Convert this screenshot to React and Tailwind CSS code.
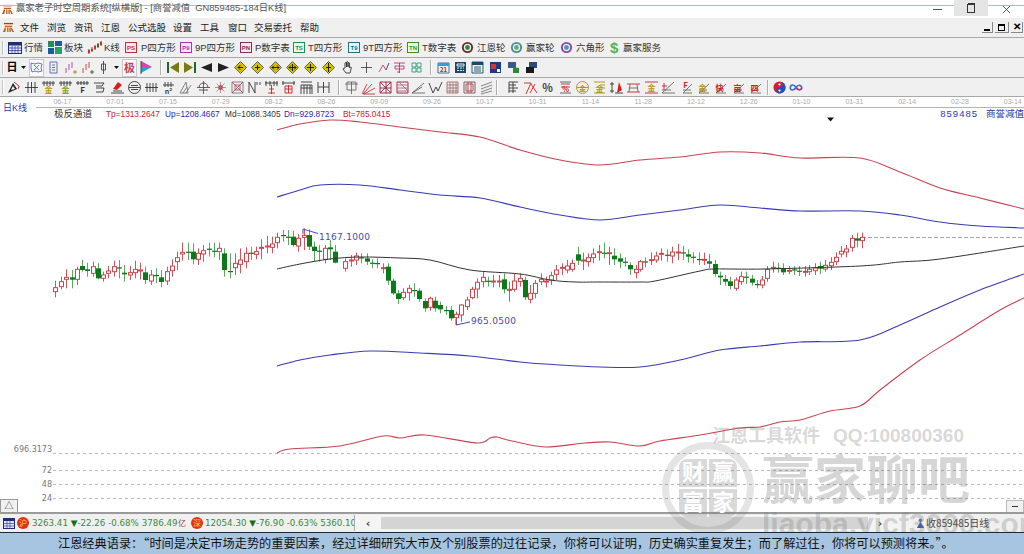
import React from "react";

const FONT = "font-['Liberation_Sans','Noto_Sans_CJK_SC',sans-serif]";

// candle data: [zoomX, bodyTop, bodyBottom, wickTop, wickBottom, colour]
const c6 = [[46,203,215,182,232,"r"],[63,185,200,170,208,"r"],[79,172,178,148,205,"r"],[95,172,179,150,205,"g"],[110,148,178,140,195,"r"],[126,138,150,120,155,"g"],[142,148,153,128,170,"g"],[158,140,160,125,170,"r"],[174,145,175,130,178,"g"],[189,165,175,155,185,"r"],[205,153,160,138,175,"r"],[221,140,155,122,170,"r"],[237,142,145,120,175,"g"],[253,158,163,135,185,"g"],[269,158,165,138,180,"r"],[285,148,158,122,175,"r"],[300,150,152,128,178,"r"],[316,157,180,140,192,"g"],[332,165,183,150,195,"r"],[348,165,168,145,190,"g"],[364,172,186,150,202,"g"],[380,155,183,140,195,"r"],[395,138,152,118,170,"r"],[410,113,125,95,150,"r"],[427,97,102,68,122,"r"],[443,95,98,68,120,"g"],[459,95,118,70,133,"g"],[474,100,118,85,135,"r"],[490,92,102,75,125,"r"],[506,86,88,68,110,"g"],[522,92,95,68,112,"g"],[538,85,95,68,120,"r"],[553,100,150,85,170,"g"],[569,153,156,100,175,"g"],[585,130,143,100,165,"r"],[601,120,133,85,160,"r"],[617,100,125,82,145,"r"],[633,98,100,80,120,"g"],[648,95,103,80,118,"r"],[664,82,84,58,118,"r"],[680,78,80,48,100,"r"],[695,72,82,50,100,"r"],[712,52,68,38,85,"r"],[728,45,47,30,65,"g"],[744,50,52,30,75,"g"],[759,50,75,32,80,"g"],[775,55,78,42,95,"r"],[791,46,52,25,90,"r"],[807,45,80,28,90,"g"],[822,80,93,65,125,"g"],[838,92,95,75,125,"g"],[854,85,118,75,130,"r"],[870,82,88,60,120,"g"],[885,95,128,75,130,"g"]];
const c7 = [[16,95,115,85,125,"r"],[32,90,93,75,110,"r"],[48,78,90,68,105,"r"],[64,82,85,70,100,"g"],[80,85,95,70,105,"g"],[96,98,100,88,115,"g"],[112,99,101,85,115,"g"],[128,113,116,100,130,"r"],[143,110,152,100,165,"g"],[159,152,190,145,195,"g"],[175,190,207,180,222,"g"],[190,187,203,175,210,"r"],[206,175,188,165,212,"r"],[222,180,182,160,200,"g"],[238,182,207,175,215,"g"],[254,213,235,205,245,"g"],[270,205,232,200,242,"r"],[286,212,235,200,245,"g"],[301,225,238,215,250,"g"],[317,240,242,228,255,"g"],[333,240,265,228,272,"g"],[349,253,263,245,285,"r"],[364,225,255,222,275,"r"],[380,210,230,200,240,"r"],[396,178,203,170,208,"r"],[412,157,177,145,205,"r"],[428,142,155,125,172,"r"],[444,152,155,140,170,"g"],[460,153,155,135,172,"r"],[476,153,155,135,172,"r"],[491,148,178,130,190,"g"],[507,178,181,155,215,"r"],[523,153,178,130,185,"r"],[539,145,155,130,170,"r"],[555,150,202,140,210,"g"],[570,190,208,165,220,"r"],[586,160,190,150,205,"r"],[602,148,155,130,165,"r"],[618,153,156,140,172,"r"],[634,137,150,125,165,"r"],[649,120,133,105,150,"r"],[665,112,114,100,135,"r"],[681,108,120,90,130,"r"],[697,100,118,88,125,"r"],[713,73,92,50,105,"g"],[729,90,93,68,120,"r"],[744,83,95,70,110,"r"],[760,72,83,55,100,"r"],[776,65,67,45,92,"r"],[792,68,70,38,85,"g"],[808,68,70,50,105,"r"],[823,77,88,55,105,"g"],[839,85,95,70,115,"g"],[855,95,98,82,110,"g"],[871,105,118,97,135,"g"],[887,118,128,105,145,"r"]];
const c8 = [[0,125,148,120,155,"r"],[16,124,127,112,142,"g"],[32,119,122,97,135,"r"],[48,108,120,95,128,"r"],[64,100,103,85,122,"r"],[80,104,107,88,125,"g"],[97,96,108,80,130,"r"],[113,96,99,72,120,"r"],[129,97,99,78,120,"g"],[145,103,110,88,128,"g"],[160,110,113,97,130,"g"],[176,117,120,97,135,"g"],[192,118,120,98,135,"r"],[208,124,131,102,145,"g"],[224,132,162,120,170,"g"],[240,167,172,155,195,"g"],[255,177,185,165,197,"g"],[271,184,198,170,208,"g"],[287,180,205,172,212,"r"],[303,170,185,155,195,"r"],[319,170,172,155,192,"g"],[335,176,188,165,197,"g"],[351,192,195,180,205,"g"],[366,180,195,168,205,"r"],[382,148,175,138,185,"r"],[398,142,145,125,158,"r"],[414,143,147,128,158,"g"],[430,147,157,130,165,"g"],[446,151,153,138,162,"r"],[462,148,151,138,165,"g"],[478,152,155,138,168,"g"],[494,154,157,138,170,"r"],[508,148,155,135,165,"r"],[524,144,152,130,165,"r"],[540,138,146,125,162,"g"],[556,136,147,120,155,"r"],[572,127,137,112,150,"r"],[587,112,125,97,135,"r"],[603,94,102,78,112,"r"],[619,87,96,75,112,"r"],[635,55,82,45,95,"r"],[651,55,62,38,82,"g"],[667,52,62,38,85,"r"]];

const conv = (list, ox, oy) => list.map(([x, t, b, wt, wb, c]) => ({ x: Math.round(ox + x / 3) + 0.5, t: oy + t / 3, b: oy + b / 3, wt: oy + wt / 3, wb: oy + wb / 3, c }));
const candles = [...conv(c6, 40, 220), ...conv(c7, 340, 230), ...conv(c8, 640, 220)];

// Catmull-Rom smoothing so the channel lines curve like the reference
const smooth = (a) => {
  let d = `M${a[0][0]} ${a[0][1]}`;
  for (let i = 0; i < a.length - 1; i++) {
    const p0 = a[i - 1] || a[i];
    const p1 = a[i];
    const p2 = a[i + 1];
    const p3 = a[i + 2] || p2;
    d += `C${p1[0] + (p2[0] - p0[0]) / 6} ${p1[1] + (p2[1] - p0[1]) / 6} ${p2[0] - (p3[0] - p1[0]) / 6} ${p2[1] - (p3[1] - p1[1]) / 6} ${p2[0]} ${p2[1]}`;
  }
  return d;
};
const redTop = [[277,130],[300,124],[330,120],[360,122],[400,127],[440,132],[480,137],[520,150],[560,160],[600,165],[640,160],[680,157],[720,152],[760,153],[800,158],[860,158],[900,172],[940,188],[980,198],[1024,209]];
const blueTop = [[277,197],[300,190],[320,185],[360,185],[400,190],[440,195],[480,198],[520,207],[560,215],[600,220],[640,215],[680,210],[720,205],[760,208],[800,211],[860,211],[900,215],[940,222],[980,226],[1024,228]];
const black = [[277,269],[300,264],[330,259],[360,257],[400,258],[430,260],[470,270],[520,274],[550,280],[575,282],[600,282],[640,282],[655,281],[700,271],[715,269],[765,269],[860,266],[900,262],[940,259],[1024,246]];
const blueBot = [[277,366],[300,360],[330,355],[370,351],[420,353],[470,356],[520,362],[560,365],[600,367],[640,367],[680,360],[720,350],[760,346],[800,342],[860,340],[900,325],[940,307],[980,290],[1024,274]];
const redBot = [[277,453],[290,449],[340,446],[383,436],[400,438],[425,435],[477,443],[490,438],[497,437],[512,441],[545,447],[585,443],[610,442],[640,446],[660,441],[700,435],[740,428],[760,427],[780,422],[800,420],[830,411],[860,406],[880,390],[920,360],[960,335],[1000,310],[1024,298]];

function Chart() {
  return (
    <svg viewBox="0 108 1024 405" className="absolute inset-0 w-[1024px] h-[405px]">
      {[453, 470, 484, 498].map((y) => (
        <line key={y} x1="53" x2="1024" y1={y + 0.5} y2={y + 0.5} stroke="#b8b8b8" strokeDasharray="3 3" />
      ))}
      <line x1="862" x2="1024" y1="237.5" y2="237.5" stroke="#b0a8a8" strokeDasharray="4 2" />
      <path d={smooth(redTop)} fill="none" stroke="#c8434f" strokeWidth="1.1" />
      <path d={smooth(blueTop)} fill="none" stroke="#3a3ab8" strokeWidth="1.1" />
      <path d={smooth(blueBot)} fill="none" stroke="#3a3ab8" strokeWidth="1.1" />
      <path d={smooth(redBot)} fill="none" stroke="#c8434f" strokeWidth="1.1" />
      {candles.map((k, i) => (
        <g key={i}>
          <line x1={k.x} x2={k.x} y1={k.wt} y2={k.wb} stroke={k.c === "r" ? "#d2555d" : "#5ca85f"} />
          {k.c === "r" ? (
            <rect x={k.x - 2} y={k.t} width="4" height={Math.max(k.b - k.t, 1)} fill="#fff" stroke="#d0444c" />
          ) : (
            <rect x={k.x - 2.5} y={k.t} width="5" height={Math.max(k.b - k.t, 1.2)} fill="#087a18" />
          )}
        </g>
      ))}
      <path d={smooth(black)} fill="none" stroke="#333" strokeWidth="1" />
      <path d="M303 229l15 4.500M303 229v5" fill="none" stroke="#4848b8" />
      <text x="319" y="240" fontSize="9" letterSpacing="0.3" fill="#4a4aa8" fontFamily="'DejaVu Sans',sans-serif">1167.1000</text>
      <path d="M456 325l14-3M456 325v-6" fill="none" stroke="#4848b8" />
      <text x="471" y="324" fontSize="9" letterSpacing="0.3" fill="#4a4aa8" fontFamily="'DejaVu Sans',sans-serif">965.0500</text>
      <g fontSize="8" fill="#777" textAnchor="end" fontFamily="'DejaVu Sans',sans-serif">
        <text x="52" y="452">696.3173</text>
        <text x="52" y="473">72</text>
        <text x="52" y="487">48</text>
        <text x="52" y="501">24</text>
      </g>
      <path d="M827 117.500h7l-3.500 4z" fill="#111" />
    </svg>
  );
}

// generic 15px toolbar icon: p = [[colour, path, fill?]], t = glyph
function Ic({ p = [], t, tc = "#b8960a", ts = 8, ty = 13 }) {
  return (
    <svg viewBox="0 0 15 15" className="w-[15px] h-[15px] shrink-0">
      {p.map(([c, d, f], i) => (
        <path key={i} d={d} stroke={f ? "none" : c} fill={f ? c : "none"} strokeWidth="0.9" />
      ))}
      {t && (
        <text x="7.5" y={ty} fontSize={ts} textAnchor="middle" fill={tc} fontWeight="700" fontFamily="'Noto Sans CJK SC',sans-serif">
          {t}
        </text>
      )}
    </svg>
  );
}

const diamond = (inner) => [["#d8c000", "M7.5 1.5l6 6-6 6-6-6z", 1], ["#555", "M7.5 1.5l6 6-6 6-6-6z"], ["#111", inner]];

const t2 = [
  { w: "w-[10px]", el: <span className="text-[11px] font-bold text-black leading-none">日</span> },
  { w: "w-[12px]", el: <Ic p={[["#111", "M5 6h5l-2.5 3z", 1]]} /> },
  { w: "w-[15px]", box: 1, el: <Ic p={[["#5a62c8", "M2 3l4 1 3-1 4 1-1 4 1 3-4 1-3-1-3 1-1-4z"], ["#c040a0", "M5 5l5 5M10 5l-5 5"]]} /> },
  { w: "w-[18px]", el: <Ic p={[["#5060c0", "M4 2h7v11H4z"], ["#5060c0", "M6 5h3M6 7.5h3M6 10h3"]]} /> },
  { w: "w-[17px]", el: <Ic p={[["#b040a0", "M3 13V8M6 10V4M9 8V2"], ["#b08000", "M12 14v-4M10 12h4"]]} /> },
  { w: "w-[17px]", el: <Ic p={[["#c04040", "M3 13V8M6 10V4M9 8V2"], ["#206020", "M12 14v-4M10 12h4"]]} /> },
  { w: "w-[15px]", el: <Ic p={[["#444", "M7.5 1v13M5.5 4h4v6h-4z"]]} /> },
  { w: "w-[11px]", el: <Ic p={[["#111", "M5 6h5l-2.5 3z", 1]]} /> },
  { w: "w-[15px]", box: 1, el: <Ic t="极" tc="#c04060" ts={11} ty={12} /> },
  { w: "w-[18px]", el: <Ic p={[["#e040a0", "M2 1l11 6H2z", 1], ["#20a8d0", "M2 7h11l-11 6z", 1], ["#333", "M2 1v13"]]} /> },
  { sep: "ml-[5px] mr-[4px]" },
  { w: "w-[14px]", el: <Ic p={[["#1a6a2a", "M1 2h2v11H1z", 1], ["#7a7a10", "M13 2L4 7.5l9 5.5z", 1]]} /> },
  { w: "w-[18px]", el: <Ic p={[["#7a7a10", "M2 2l9 5.5-9 5.5z", 1], ["#1a6a2a", "M12 2h2v11h-2z", 1]]} /> },
  { w: "w-[17px]", el: <Ic p={[["#222", "M13 3L2 7.5l11 4.5z", 1]]} /> },
  { w: "w-[17px]", el: <Ic p={[["#222", "M2 3l11 4.5L2 12z", 1]]} /> },
  ...["M5 7.5h5M7.5 5l-2.5 2.5L7.5 10", "M5 7.5h5M7.5 10V5", "M4 7.5h7M6 5.5l-2 2 2 2M9 5.5l2 2-2 2", "M4 7.5h7M7.5 4v7M6 5.5l-2 2 2 2M9 5.5l2 2-2 2", "M4 7.5h7M7.5 4v7", "M7.5 3v9M5 7.5h5"].map((d, i) => ({ w: ["w-[17px]", "w-[17px]", "w-[18px]", "w-[17px]", "w-[18px]", "w-[19px]"][i], el: <Ic p={diamond(d)} /> })),
  { w: "w-[19px]", el: <Ic p={[["#333", "M5 8V3q1-1 1.5 0V7V2q1-1 1.5 0v5V3q1-1 1.5 0v5l1-1q1 0 .8 1L10 13H6L3 9q0-1 1-.5z"]]} /> },
  { w: "w-[18px]", el: <Ic p={[["#444", "M7.5 2v11M2 7.5h11"]]} /> },
  { w: "w-[16px]", el: <Ic p={[["#d04060", "M3 12l4-7 3 5"], ["#204080", "M10 10l3-7"]]} /> },
  { w: "w-[16px]", el: <Ic p={[["#c03080", "M2 3h11M3 6h9v3H3zM7.5 3v10M5 12h3"]]} /> },
  { w: "w-[18px]", el: <Ic p={[["#20a080", "M3 3h4v4H3zM8 3h4v4H8zM3 8h4v4H3zM8 8h4v4H8z"]]} /> },
  { sep: "ml-[5px] mr-[4px]" },
  { w: "w-[15px]", el: <Ic p={[["#406080", "M2 3h11v10H2z"], ["#30a0d0", "M2 3h11v3H2z", 1]]} t="21" tc="#a03030" ts={6} ty={12} /> },
  { w: "w-[18px]", el: <Ic p={[["#1a4a6a", "M2 2h11v11H2z", 1], ["#fff", "M4 4h7v2H4zM4 8h2M7 8h2M10 8h1M4 10.5h2M7 10.5h2M10 10.5h1"]]} /> },
  { w: "w-[17px]", el: <Ic p={[["#1a4a6a", "M2 2h11v11H2z"], ["#1a4a6a", "M2 2h11v3H2z", 1], ["#1a4a6a", "M4 7h7M4 9h7M4 11h7"]]} /> },
  { w: "w-[18px]", el: <Ic p={[["#1a3a8a", "M2 2h11v11H2z", 1], ["#e03030", "M3 4h5v5H3z", 1], ["#fff", "M9 9h3v3H9z", 1]]} /> },
  { w: "w-[18px]", el: <Ic p={[["#3a5a8a", "M2 2h8v6H2z", 1], ["#2a8a3a", "M7 7l6 1v5H7z", 1]]} /> },
  { w: "w-[18px]", el: <Ic p={[["#2a4a7a", "M5 2h8v6H5z", 1], ["#1a1a1a", "M2 7h8v6H2z", 1]]} /> },
];

const g = (x) => [["#333", x]];
const t3a = [
  { p: [["#222", "M2 13L7 3l4 6z", 1], ["#c22", "M8 2l5 4-1 3"], ["#fff", "M5 10l2-4 2 3z", 1]] },
  { p: g("M1 7.5h13M4 2v11M7.5 2v11M11 2v11") },
  { p: g("M1 3h13M3 1v5M6 1v5M9 1v5M12 1v5"), t: "金" },
  { p: g("M1 3h13M3 1v5M6 1v5M9 1v5M12 1v5"), t: "金", tc: "#8a9a10" },
  { p: g("M1 3h13M3 1v4M6 1v4M9 1v4M12 1v4"), t: "F", tc: "#333" },
  { p: [["#333", "M2 3h10l-2 3H4M4 8h8l-1 4H4"]] },
  { p: [["#c22", "M3 9L8 2l4 3-5 5z", 1], ["#333", "M1 13h13M3 11h9"]] },
  { p: [["#333", "M7.5 1.5a6 6 0 100 12 6 6 0 000-12zM2 7.5h11M4 5.5h7M4 9.5h7"]] },
  { p: g("M1 7.5h13M3 3v9M6 3v9M9 3v9M12 3v9") },
  { p: g("M2 5h11M4 2v5M7 2v5M10 2v5"), t: "n²", tc: "#444", ts: 7, ty: 13.5 },
  { p: [["#777", "M2 13L8 2l2 11zM5 13l4-6M8 13l5-8"]] },
  { p: [["#c02040", "M7.5 1v13M1 7.5h13"], ["#444", "M3 7.5a4.5 4.5 0 019 0M3 10h9"]] },
  { p: [["#c08080", "M7.5 2v11M2 7.5h11M3.5 3.5l8 8M11.5 3.5l-8 8"], ["#a02040", "M6 6h3v3H6z"]] },
  { p: [["#777", "M2 2h11v11H2z"], ["#a05060", "M2 2l11 11M13 2L2 13M5 5h5v5H5z"]] },
  { p: g("M2 13V2l6 11V2M10 2v3M13 2v3") },
  { p: [["#333", "M2 1v5M6 1v5M10 1v5M13 1v5M1 3h13"], ["#c22", "M7.5 5v9M5 9h5M4 13h7"]] },
  { p: [["#333", "M2 1v4M13 1v4M1 3h13"], ["#c22", "M4 6h7v7H4zM4 9h7M7.5 5v8"]] },
  { p: g("M2 2h11M2 5h11v9M5 5v9M8 5v9M11 5v9M2 5v9M2 8h11") },
  { p: g("M2 2v11M13 2v11M7.5 2v11M2 7h11") },
];
const t3b = [
  { p: [["#666", "M3 2h9v8H3zM1 4h13M7.5 2v12"]] },
  { p: [["#c83040", "M1 14L6 4M2 14l9-10M3 14l11-6M2 14h12"]] },
  { p: [["#8a2040", "M2 2h11v11H2zM2 2l11 11M13 2L2 13M2 8h11M8 2v11"]] },
  { p: [["#8a2040", "M2 2h11v11H2z"], ["#b06080", "M2 5h11M2 8h11M2 11h11M4 2l9 9"]] },
  { p: [["#666", "M1 13L13 3M1 13h13M1 13l10-6"]] },
  { p: g("M1 3l4 10 3-6 2 4 4-9") },
  { p: [["#a07070", "M2 2h11v11H2zM5 2v11M8 2v11M11 2v11M2 5h11M2 8h11M2 11h11"]] },
  { p: [["#705050", "M2 2h11v11H2z"], ["#b04050", "M4 4h7v7H4zM6 2v11M9 2v11"]] },
  { p: [["#777", "M2 6l11-4M2 9l11-4M2 12l11-4M2 14l11-3"]] },
];
const t3c = [
  { p: [["#333", "M3 2v11M3 2h9M3 5h7M3 8h9M3 11h7M7 2v11"]] },
  { p: [["#c22", "M1 3h7L3 14M8 4l6 9M12 4l-5 9"]] },
  { t: "%", tc: "#444", ts: 11, ty: 12 },
  { p: [["#555", "M2 2h11M2 13h11"], ["#c22", "M3 4l9 0M3 7h9"]], t: "%", tc: "#c22", ts: 7, ty: 12 },
  { p: [["#a89000", "M7.5 1.5a6 6 0 100 12 6 6 0 000-12zM2 7.5h11"]], t: "金", ts: 7, ty: 11 },
  { p: [["#a89000", "M2 2h11M8 5h5M8 8h5M2 13h11"]], t: "金", ts: 8, ty: 12 },
  { p: [["#333", "M3 2v11M1 4h4M1 11h4"], ["#c22", "M8 13l2-11 3 8z", 1], ["#333", "M6 13h8"]] },
  { p: [["#c22", "M1 4h13M1 12h13"], ["#666", "M4 4l-1 8M11 4l1 8M3 8h9"]] },
  { p: [["#c22", "M1 2h13M1 13h13"]], t: "金", ts: 8, ty: 11 },
  { p: [["#666", "M1 13L13 2M1 13h13M1 10h9"], ["#c22", "M3 3v7M1 6h5"]] },
  { p: [["#666", "M5 13L14 4M5 13h9M5 10h8"]], t: "F", tc: "#c22", ts: 8, ty: 8 },
  { p: [["#666", "M4 13L14 4M4 13h10M4 10h8"]], t: "金", ts: 8, ty: 11 },
  { p: [["#666", "M4 13L14 4M4 13h10M4 10h8"]], t: "快", tc: "#c22", ts: 8, ty: 11 },
  { p: [["#666", "M4 13L14 4M4 13h10M4 10h8"]], t: "亩", tc: "#c22", ts: 8, ty: 11 },
  { p: [["#666", "M4 13L14 4M4 13h10M4 10h8"]], t: "四", tc: "#c22", ts: 8, ty: 11 },
];

function Grip() {
  return <div className="w-[2px] h-[14px] ml-[2px] bg-[#c4c4c4] border-r border-white shrink-0" />;
}
function Sep({ c }) {
  return <div className={`w-[2px] h-[15px] bg-[#b0b0b0] border-r border-white shrink-0 ${c}`} />;
}

function Badge({ s, c }) {
  return (
    <span className={`w-[12px] h-[11px] border ${c} flex items-center justify-center text-[6px] font-bold leading-none shrink-0`}>{s}</span>
  );
}
function Ring({ a, b }) {
  return (
    <svg viewBox="0 0 14 14" className="w-[13px] h-[13px] shrink-0">
      <circle cx="7" cy="7" r="6" fill={a} />
      <circle cx="7" cy="7" r="4" fill="#e8f0e8" />
      <circle cx="7" cy="7" r="2.6" fill={b} />
    </svg>
  );
}

const t1 = [
  { w: "w-[40px]", label: "行情", icon: (
    <svg viewBox="0 0 14 12" className="w-[14px] h-[12px] shrink-0"><rect x=".5" y=".5" width="13" height="11" fill="#dfe6f4" stroke="#1f2d7a" /><path d="M1 1h12v2.500H1z" fill="#1f2d7a" /><path d="M4 4v7M7 4v7M10 4v7M1 6h12M1 8.500h12" stroke="#3a4a9a" strokeWidth=".8" /></svg>
  ) },
  { w: "w-[40px]", label: "板块", icon: (
    <svg viewBox="0 0 14 13" className="w-[14px] h-[13px] shrink-0"><path d="M0 0h6v6H0z" fill="#2a8a5a" /><path d="M7 0h7v5H7z" fill="#1c5aa0" /><path d="M0 7h6v6H0z" fill="#1c5aa0" /><path d="M7 6h7v7H7z" fill="#2aa06a" /></svg>
  ) },
  { w: "w-[37px]", label: "K线", icon: (
    <svg viewBox="0 0 14 13" className="w-[14px] h-[13px] shrink-0"><path d="M1 13V8M4 11V6M7 9V4M10 7V2M13 5V0" stroke="#c22" /><path d="M4 8v2M10 3v3" stroke="#1a7a2a" strokeWidth="2" /><path d="M0 9h2v3H0zM6 5h2v3H6zM12 1h2v3h-2z" fill="#d03030" /></svg>
  ) },
  { w: "w-[55px]", label: "P四方形", gap: "gap-[4px]", icon: <Badge s="PS" c="border-[#c03030] text-[#c03030] bg-[#f8e8e8]" /> },
  { w: "w-[60px]", label: "9P四方形", gap: "gap-[3px]", icon: <Badge s="P9" c="border-[#b030b0] text-[#b030b0] bg-[#f8e8f8]" /> },
  { w: "w-[53px]", label: "P数字表", gap: "gap-[3px]", icon: <Badge s="PN" c="border-[#803060] text-[#803060] bg-[#f8e8f0]" /> },
  { w: "w-[55px]", label: "T四方形", gap: "gap-[3px]", icon: <Badge s="TS" c="border-[#209050] text-[#209050] bg-[#e8f8ec]" /> },
  { w: "w-[59px]", label: "9T四方形", gap: "gap-[3px]", icon: <Badge s="T9" c="border-[#207090] text-[#207090] bg-[#e8f4f8]" /> },
  { w: "w-[54px]", label: "T数字表", gap: "gap-[3px]", icon: <Badge s="TN" c="border-[#409020] text-[#409020] bg-[#eef8e8]" /> },
  { w: "w-[49px]", label: "江恩轮", gap: "gap-[3px]", icon: <Ring a="#6a2a2a" b="#2a8a4a" /> },
  { w: "w-[50px]", label: "赢家轮", gap: "gap-[3px]", icon: <Ring a="#4a8a9a" b="#60b070" /> },
  { w: "w-[50px]", label: "六角形", gap: "gap-[3px]", icon: <Ring a="#8a40b0" b="#40a0a0" /> },
  { w: "w-[60px]", label: "赢家服务", gap: "gap-[4px]", icon: <span className="text-[#5ab04a] font-bold text-[15px] leading-none w-[9px]">$</span> },
];

const menu = [["文件", "w-[27px]"], ["浏览", "w-[27px]"], ["资讯", "w-[27px]"], ["江恩", "w-[27px]"], ["公式选股", "w-[45px]"], ["设置", "w-[27px]"], ["工具", "w-[28px]"], ["窗口", "w-[26px]"], ["交易委托", "w-[46px]"], ["帮助", "w-[27px]"]];
const dates = ["06-17","07-01","07-15","07-29","08-12","08-26","09-09","09-26","10-17","10-31","11-14","11-28","12-12","12-26","01-10","01-31","02-14","02-28","03-14"];

function Logo() {
  return (
    <svg viewBox="0 0 12 12" className="w-[11px] h-[11px] shrink-0">
      <path d="M1 1h10v1.500H1z" fill="#c03020" />
      <path d="M2 4h8v1.500H2zM0 11l2-5h1.500l-1 5zM4.500 6h1.500v5H4.500zM7 6h1.500v5H7zM9.500 6L12 11h-2L8.500 7z" fill="#b86020" />
    </svg>
  );
}

function Row({ children, h }) {
  return <div className={`flex items-center ${h} bg-[#f0f0f0] border-b border-[#a8a8a8] shrink-0`}>{children}</div>;
}

function Watermark() {
  const tone = "text-[rgba(120,120,120,0.3)]";
  return (
    <div className="absolute inset-0 pointer-events-none">
      <div className={`absolute left-[712px] top-[426px] text-[18px] leading-[20px] font-bold whitespace-nowrap ${tone} ${FONT}`}>
        江恩工具软件<span className="ml-[13px] text-[19px]">QQ:100800360</span>
      </div>
      <div className="absolute left-[662px] top-[442px] w-[92px] h-[92px] rounded-full border-[7px] border-[rgba(120,120,120,0.2)] flex items-center justify-center">
        <div className="grid grid-cols-2 gap-[2px] w-[58px] h-[58px] rounded-[8px] overflow-hidden">
          {["财", "赢", "富", "家"].map((c) => (
            <span key={c} className="bg-[rgba(120,120,120,0.28)] text-white text-[22px] leading-[28px] font-bold text-center">{c}</span>
          ))}
        </div>
      </div>
      <div className={`absolute left-[762px] top-[446px] text-[52px] leading-[70px] font-bold whitespace-nowrap ${tone} ${FONT}`}>赢家聊吧</div>
      <div className={`absolute left-[762px] top-[507px] text-[30px] leading-[34px] font-bold whitespace-nowrap ${tone} ${FONT}`}>liaoba.yicf3000.com</div>
    </div>
  );
}

export default function App() {
  return (
    <div className={`relative w-[1024px] h-[554px] overflow-hidden bg-white flex flex-col text-[#222] ${FONT}`}>
      {/* title bar */}
      <div className="relative flex items-center h-[18px] bg-white shrink-0 pl-[2px]">
        <div className="absolute left-0 right-0 top-[5px] h-px bg-[#a9c2d2]" />
        <Logo />
        <span className="ml-[3px] text-[9.3px] leading-none text-[#555] whitespace-nowrap relative">赢家老子时空周期系统[纵横版] - [商誉减值&nbsp; GN859485-184日K线]</span>
        <div className="ml-auto flex h-[18px] items-center relative">
          <div className="w-[34px] flex justify-center"><div className="w-[9px] h-px bg-[#555]" /></div>
          <div className="w-[34px] h-[16px] bg-[#e5e5e5] flex items-center justify-center self-start">
            <div className="relative w-[8px] h-[9px] border border-[#333]"><div className="absolute -top-[2px] left-0 w-[7px] h-[1px] bg-[#333]" /></div>
          </div>
          <div className="w-[36px] flex justify-center text-[#555]">
            <svg viewBox="0 0 10 10" className="w-[9px] h-[9px]"><path d="M1 1l8 8M9 1l-8 8" stroke="#444" /></svg>
          </div>
        </div>
      </div>
      {/* menu */}
      <div className="flex items-center h-[20px] bg-[#f0f0f0] border-b border-[#a8a8a8] shrink-0 pl-[3px] text-[9.5px] text-[#222]">
        <Logo />
        <div className="flex ml-[6px]">
          {menu.map(([m, w]) => <span key={m} className={`${w} whitespace-nowrap leading-none`}>{m}</span>)}
        </div>
        <div className="ml-auto flex items-center gap-[2px] pr-[1px]">
          <div className="w-[11px] h-[11px] flex items-end justify-center border-b border-r border-[#888]"><div className="w-[6px] h-[2px] bg-black mb-px" /></div>
          <div className="w-[14px] h-[11px] flex items-center justify-center border-b border-r border-[#888]"><div className="w-[7px] h-[7px] border border-black border-t-2" /></div>
          <div className="w-[12px] h-[11px] flex items-center justify-center border-b border-r border-[#888] text-[10px] font-bold leading-none text-black">✕</div>
        </div>
      </div>
      {/* toolbar 1 */}
      <Row h="h-[20px]">
        <Grip />
        <div className="flex items-center ml-[4px]">
          {t1.map((it) => (
            <div key={it.label} className={`flex items-center ${it.gap || "gap-[2px]"} ${it.w} shrink-0 text-[9.5px] leading-none text-[#333] whitespace-nowrap`}>
              {it.icon}<span>{it.label}</span>
            </div>
          ))}
        </div>
      </Row>
      {/* toolbar 2 */}
      <Row h="h-[20px]">
        <Grip />
        <div className="flex items-center ml-[3px]">
          {t2.map((it, i) =>
            it.sep ? <Sep key={i} c={it.sep} /> : (
              <div key={i} className={`${it.w} h-[18px] shrink-0 flex items-center justify-center ${it.box ? "bg-[#f9f9f9] border border-[#c8c8c8]" : ""}`}>{it.el}</div>
            )
          )}
        </div>
      </Row>
      {/* toolbar 3 */}
      <Row h="h-[19px]">
        <Grip />
        <div className="flex items-center ml-[1.4px]">
          {t3a.map((it, i) => <div key={i} className="w-[17.2px] flex justify-center shrink-0"><Ic {...it} /></div>)}
          <Sep c="ml-[6px] mr-[3px]" />
          {t3b.map((it, i) => <div key={i} className="w-[16.9px] flex justify-center shrink-0"><Ic {...it} /></div>)}
          <Sep c="ml-[1px] mr-[7px]" />
          {t3c.map((it, i) => <div key={i} className="w-[17.2px] flex justify-center shrink-0"><Ic {...it} /></div>)}
          <Sep c="ml-[4px] mr-[3px]" />
          <div className="w-[16px] flex justify-center shrink-0">
            <svg viewBox="0 0 14 14" className="w-[13px] h-[13px]"><circle cx="7" cy="7" r="6.5" fill="#d02030" /><path d="M7 .5a6.500 6.500 0 010 13 3.200 3.200 0 010-6.500 3.200 3.200 0 000-6.500z" fill="#2050c0" /><circle cx="7" cy="3.700" r="1.200" fill="#fff" /><circle cx="7" cy="10.300" r="1.200" fill="#fff" /></svg>
          </div>
          <div className="w-[16px] flex justify-center shrink-0">
            <svg viewBox="0 0 16 10" className="w-[14px] h-[9px]"><path d="M8 5C6 1.500 2 1 1.500 5s4.500 3.500 6.500 0 6-3.500 6.500 0-4.500 3.500-6.500 0z" fill="none" stroke="#3070d0" strokeWidth="1.8" /><path d="M8 5c2 3.500 6 3.500 6.500 0" fill="none" stroke="#d03060" strokeWidth="1.8" /></svg>
          </div>
        </div>
      </Row>
      {/* date axis */}
      <div className="flex h-[11px] shrink-0">
        <div className="w-[52px] shrink-0 bg-white" />
        <div className="flex-1 flex border-b border-[#b4b4b4] -ml-[16px]">
          {dates.map((d) => <span key={d} className="w-[52.8px] shrink-0 text-center text-[7px] leading-[10px] text-[#aaa]">{d}</span>)}
        </div>
      </div>
      {/* chart */}
      <div className="relative flex-1 min-h-0">
        <Chart />
        <div className="absolute -top-[6px] left-[3px] text-[9px] leading-[12px] text-[#2a3aa8] whitespace-nowrap">日K线</div>
        <div className="absolute top-0 left-0 right-0 flex items-center h-[12px] pl-[54px] text-[8.3px] leading-none whitespace-nowrap">
          <span className="w-[52px] text-[9.5px] text-[#333]">极反通道</span>
          <span className="w-[59px] text-[#d02030]">Tp=1313.2647</span>
          <span className="w-[60px] text-[#2a2ab0]">Up=1208.4667</span>
          <span className="w-[59px] text-[#333]">Md=1088.3405</span>
          <span className="w-[59px] text-[#2a2ab0]">Dn=929.8723</span>
          <span className="text-[#d02030]">Bt=785.0415</span>
          <span className="ml-auto text-[#2a3aa8] text-[9.5px]"><span className="tracking-[1px]">859485</span><span className="ml-[8px]">商誉减值</span></span>
        </div>
        <div className="absolute left-0 bottom-0 w-[18px] h-[13px] bg-[#f0f0f0] border border-b-0 border-[#999] flex items-center justify-center text-[9px] leading-none text-[#333]">△</div>
        <div className="absolute right-0 bottom-0 w-[18px] h-[12px] bg-[#f0f0f0] border border-b-0 border-[#bbb] flex items-center justify-center"><div className="w-[6px] h-px bg-[#333]" /></div>
      </div>
      {/* status */}
      <div className="flex items-center h-[20px] shrink-0 bg-[#f0f0f0] border-t-2 border-[#9a9a9a] text-[8.7px] leading-none text-[#3d8a3d] font-['DejaVu_Sans',sans-serif] whitespace-nowrap overflow-hidden">
        <div className="pl-[3px] flex items-center w-[354px] overflow-hidden shrink-0">
          <svg viewBox="0 0 12 11" className="w-[12px] h-[11px] shrink-0"><rect x=".5" y=".5" width="11" height="10" fill="#dfe6f4" stroke="#1f2d7a" /><path d="M1 1h10v2H1z" fill="#1f2d7a" /><path d="M4 3v7M7 3v7M1 5.500h10M1 8h10" stroke="#3a4a9a" strokeWidth=".7" /></svg>
          <span className="ml-[2px] w-[12px] h-[12px] rounded-full bg-[#e0301a] text-[#ffd040] text-[8px] flex items-center justify-center shrink-0 font-['Noto_Sans_CJK_SC',sans-serif]">沪</span>
          <span className="ml-[3px] w-[146px] shrink-0 overflow-hidden">3263.41 <span className="text-[#1a6a1a]">▼</span>-22.26 -0.68% 3786.49</span>
          <span className="w-[12px] text-[#a04040] text-[8px] shrink-0 font-['Noto_Sans_CJK_SC',sans-serif]">亿</span>
          <span className="w-[12px] ml-[1px] h-[12px] rounded-full bg-[#e0301a] text-[#ffd040] text-[8px] flex items-center justify-center shrink-0 font-['Noto_Sans_CJK_SC',sans-serif]">深</span>
          <span className="ml-[2px] shrink-0">12054.30 <span className="text-[#1a6a1a]">▼</span>-76.90 -0.63% 5360.10</span>
        </div>
        <div className="flex items-center w-[558px] h-[16px] shrink-0 bg-[#f4f4f4] border-l border-[#aaa]">
          <div className="w-[26px] text-center text-[#444] text-[11px] font-bold shrink-0">‹</div>
          <div className="flex-1 h-[12px] bg-[#d4d4d4]" />
          <div className="w-[44px] text-center text-[#444] text-[11px] font-bold shrink-0 pr-[20px]">›</div>
        </div>
        <svg viewBox="0 0 10 12" className="ml-[4px] w-[9px] h-[11px] shrink-0"><circle cx="5" cy="2.500" r="2" fill="#5a78c0" /><path d="M5 4L1 11h8z" fill="#3a5aa8" /></svg>
        <span className="ml-[1px] text-[#444] text-[10px] font-['Noto_Sans_CJK_SC',sans-serif]">收859485日线</span>
      </div>
      <Watermark />
      {/* quote */}
      <div className="relative h-[22px] shrink-0 bg-[#a7c4e0] border-t-[1.5px] border-[#1a2a3a] flex items-center pl-[58px] text-[12.2px] leading-none text-[#111] whitespace-nowrap font-['Noto_Sans_CJK_SC',sans-serif]">
        江恩经典语录：“时间是决定市场走势的重要因素，经过详细研究大市及个别股票的过往记录，你将可以证明，历史确实重复发生；而了解过往，你将可以预测将来。”。
      </div>
    </div>
  );
}
